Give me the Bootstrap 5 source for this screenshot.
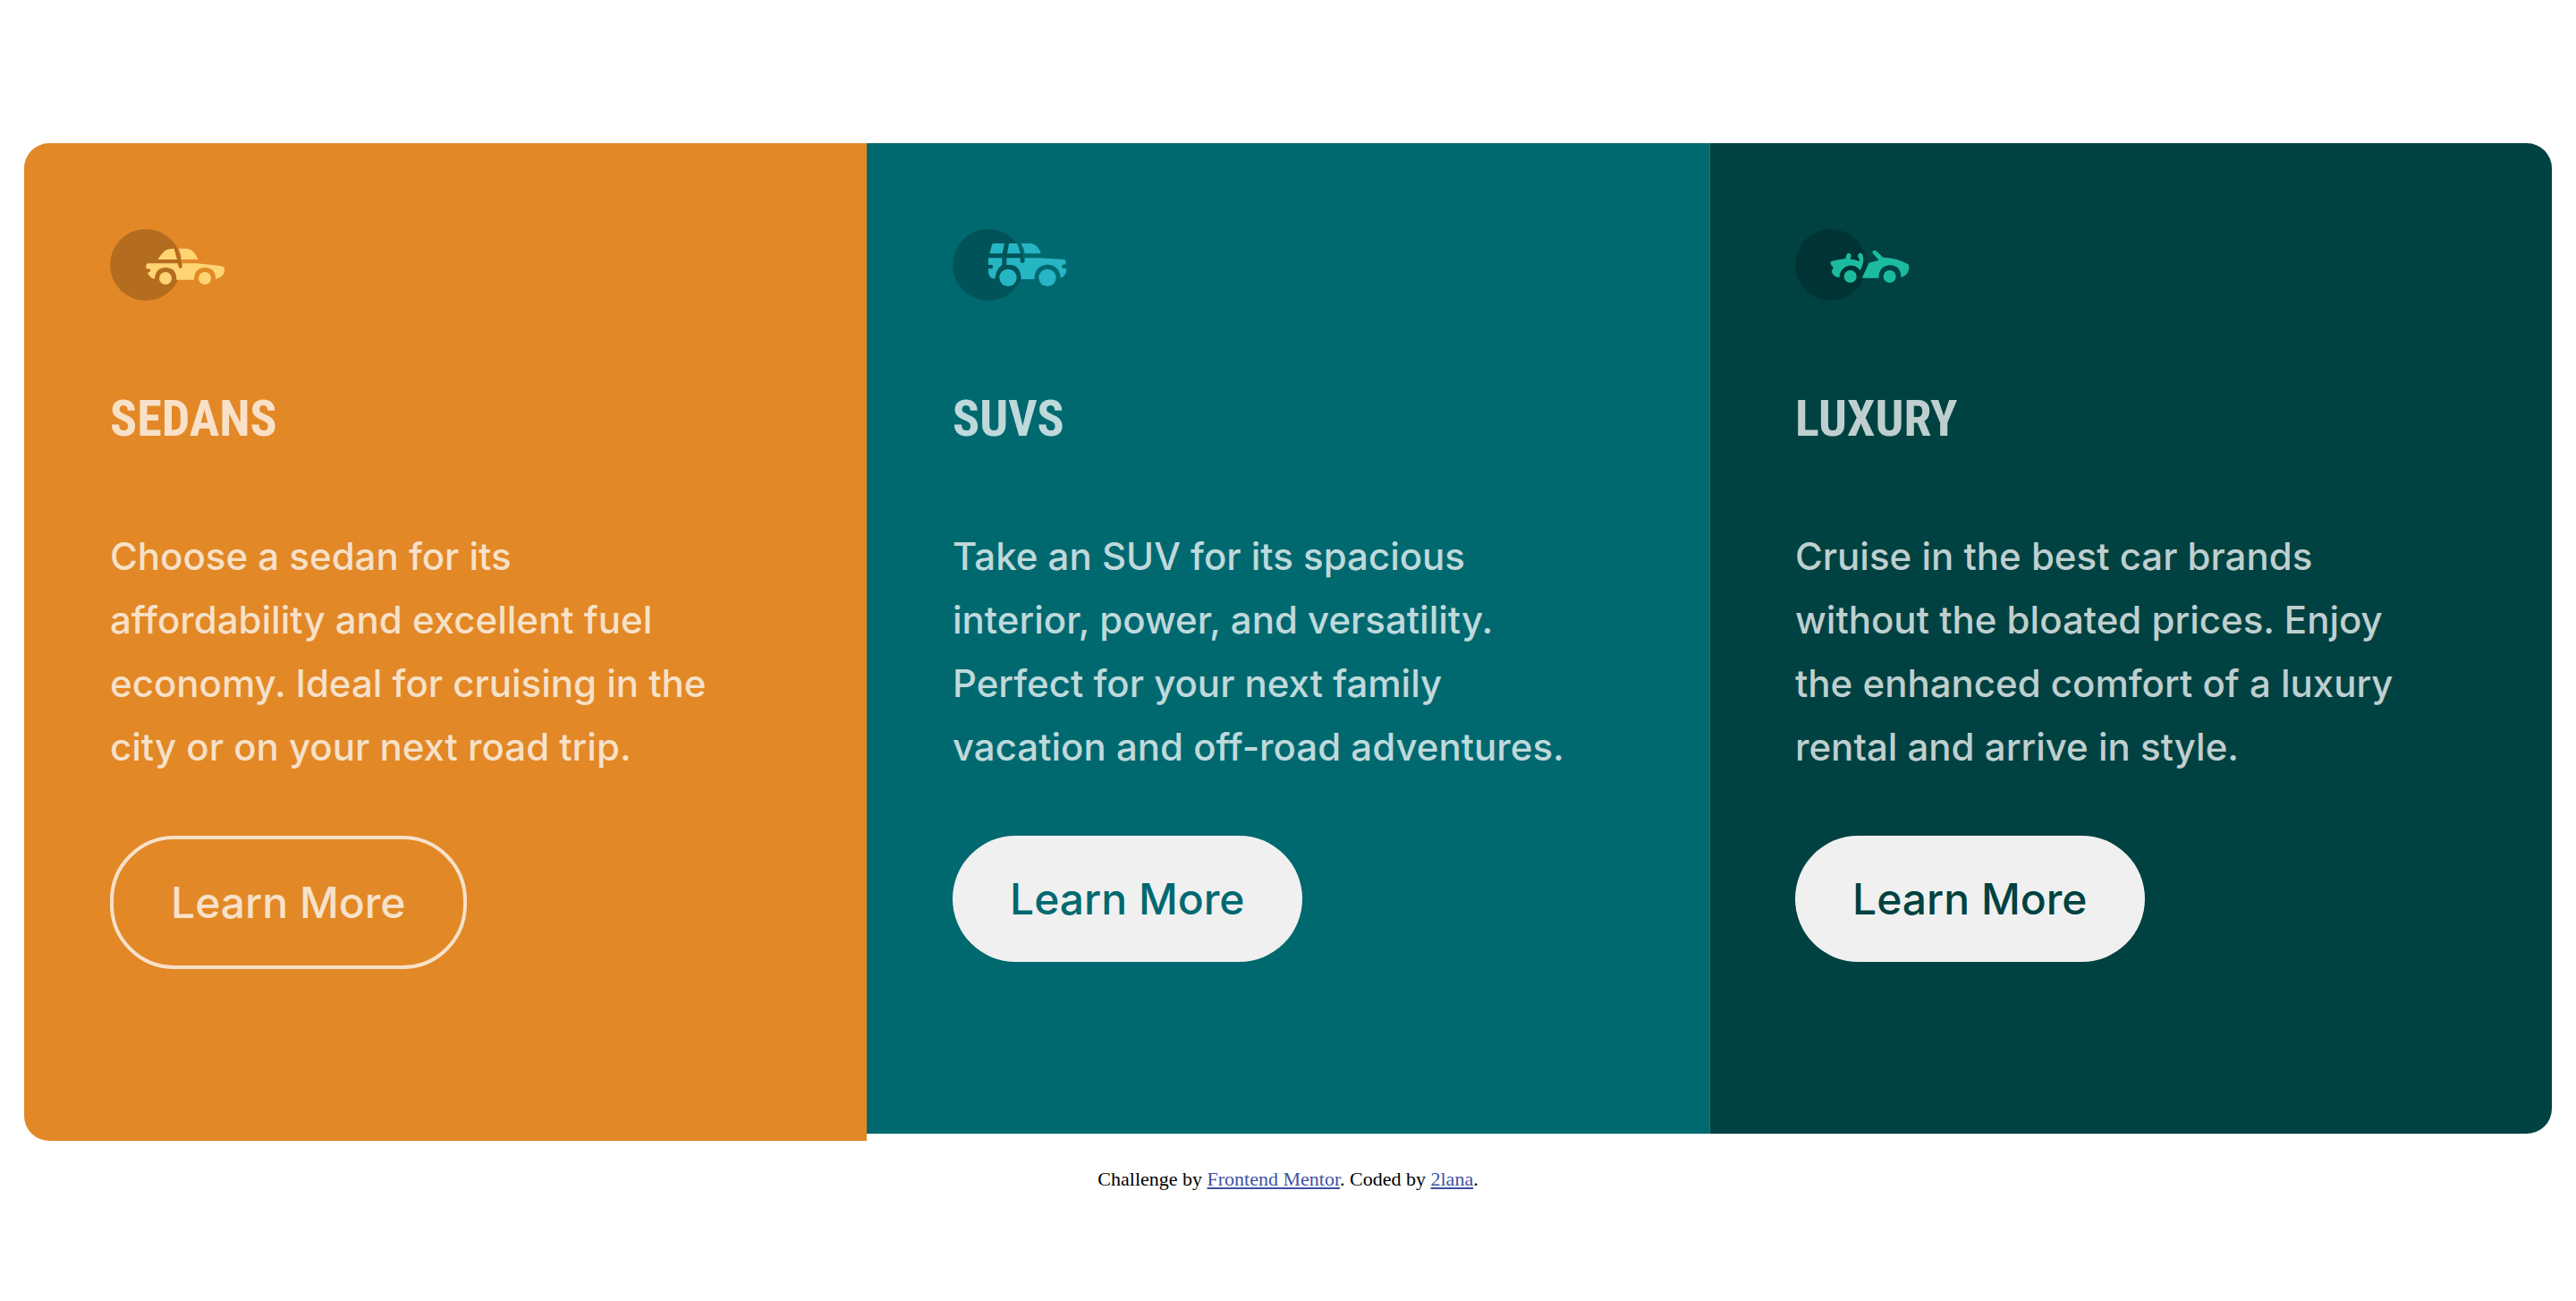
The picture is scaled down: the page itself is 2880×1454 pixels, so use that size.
<!DOCTYPE html>
<html lang="en">
<head>
<meta charset="utf-8">
<meta name="viewport" content="width=device-width, initial-scale=1">
<title>3-column preview card component</title>
<link href="https://cdn.jsdelivr.net/npm/bootstrap@5.3.0/dist/css/bootstrap.min.css" rel="stylesheet">
<style>
  body { background: #fff; font-family: Inter, sans-serif; }
  .page { padding: 160px 27px 0; }
  .panel { padding: 96px 96px 192px; color: rgba(255, 255, 255, .75); }
  .panel-sedans { background: #e28826; border-radius: 28px 0 0 28px; }
  .panel-suvs { background: #006970; }
  .panel-luxury { background: #004241; border-radius: 0 28px 28px 0; box-shadow: inset 1px 0 #2c7373; }
  .car { width: 128px; height: 80px; display: block; }
  .panel-title { font: 700 56px/72px "Roboto Condensed", "Liberation Sans Narrow", "Liberation Sans", sans-serif; margin: 96px 0 82px; }
  .panel-text { font-size: 42px; font-weight: 500; line-height: 71px; margin: 0 0 64px; }
  .learn { font-size: 48px; font-weight: 500; line-height: 61px; padding: 40px 64px; border-radius: 72px; }
  .learn-fill, .learn-fill:hover { background: #f0f0f0; border: 0; }
  .learn-line { border: 4px solid #f8e1c9; color: #f8e1c9; }
  .panel-suvs .learn { color: #006970; }
  .panel-luxury .learn { color: #004241; }
  .attribution { font: 22px/24px "Liberation Serif", serif; color: #000; margin-top: 31px; }
  .attribution a { color: #3e52a3; }
</style>
</head>
<body>
<div class="page">
  <main class="row g-0 align-items-start">
    <section class="col-4 panel panel-sedans">
      <svg class="car" viewBox="39 48 384 240" aria-hidden="true">
        <circle cx="159" cy="168" r="120" fill="#000" fill-opacity=".2"/>
        <g fill="#ffd473">
          <path d="M199 150Q216 125 228 118Q237 113 254 113L264 150Z"/>
          <path d="M269 113H290Q309 113 320 126Q330 138 335 150H278Q277 130 269 113Z"/>
          <path d="M167 163H266L270 177Q276 183 281 176L282 163H330L407 171Q423 172 423 184Q424 209 393 216Q394 178 357 177Q321 179 321 218H262Q262 178 226 177Q190 179 189 215Q172 212 165 194Q176 192 175 186Q174 180 160 180V171Q160 164 167 163Z"/>
          <circle cx="225" cy="213" r="21"/><circle cx="357" cy="213" r="21"/>
        </g>
      </svg>
      <h2 class="panel-title">SEDANS</h2>
      <p class="panel-text">Choose a sedan for its<br>affordability and excellent fuel<br>economy. Ideal for cruising in the<br>city or on your next road trip.</p>
      <button type="button" class="btn learn learn-line">Learn More</button>
    </section>
    <section class="col-4 panel panel-suvs">
      <svg class="car" viewBox="47 48 384 240" aria-hidden="true">
        <circle cx="167" cy="168" r="120" fill="#000" fill-opacity=".2"/>
        <g fill="#26b5c3">
          <path d="M184 96H221L214 130H171L179 101Q180 96 184 96Z"/>
          <path d="M236 96H263Q271 112 275 130H230Z"/>
          <path d="M277 96H307Q335 99 343 130H289Q286 111 277 96Z"/>
          <path d="M167 145H213V169Q194 180 189 214Q170 216 167 193V181H177Q183 180 183 174Q183 168 177 168H167Z"/>
          <path d="M228 145H274V156Q276 162 282 162Q289 161 289 154V145H331L423 150Q427 152 427 166Q413 166 413 174Q414 181 429 180Q431 202 410 212Q404 168 365 167Q323 170 321 216H277Q275 173 244 168H228Z"/>
          <circle cx="233" cy="211" r="29"/><circle cx="365" cy="211" r="29"/>
        </g>
      </svg>
      <h2 class="panel-title">SUVS</h2>
      <p class="panel-text">Take an SUV for its spacious<br>interior, power, and versatility.<br>Perfect for your next family<br>vacation and off-road adventures.</p>
      <button type="button" class="btn learn learn-fill">Learn More</button>
    </section>
    <section class="col-4 panel panel-luxury">
      <svg class="car" viewBox="50 48 384 240" aria-hidden="true">
        <circle cx="170" cy="168" r="120" fill="#000" fill-opacity=".2"/>
        <g fill="#1cbb9f">
          <path d="M171 156Q196 150 219 147L223 133Q226 128 232 129Q239 132 238 138L235 149Q251 149 263 155L267 152L260 140Q260 130 267 128Q274 128 277 135Q284 160 268 187Q257 169 235 170Q202 173 198 211Q178 208 173 192Q172 184 179 178L172 170Q166 160 171 156Z"/>
          <path d="M274 212L298 161L331 152L310 130Q307 120 317 119Q321 119 325 124L345 143Q397 146 427 165Q433 167 432 178Q431 203 405 210Q405 170 367 169Q331 172 330 212Z"/>
          <circle cx="235" cy="207" r="21"/><circle cx="367" cy="207" r="21"/>
        </g>
      </svg>
      <h2 class="panel-title">LUXURY</h2>
      <p class="panel-text">Cruise in the best car brands<br>without the bloated prices. Enjoy<br>the enhanced comfort of a luxury<br>rental and arrive in style.</p>
      <button type="button" class="btn learn learn-fill">Learn More</button>
    </section>
  </main>
  <footer class="attribution text-center">
    Challenge by <a href="https://www.frontendmentor.io">Frontend Mentor</a>. Coded by <a href="#">2lana</a>.
  </footer>
</div>
<script src="https://cdn.jsdelivr.net/npm/bootstrap@5.3.0/dist/js/bootstrap.bundle.min.js"></script>
</body>
</html>
